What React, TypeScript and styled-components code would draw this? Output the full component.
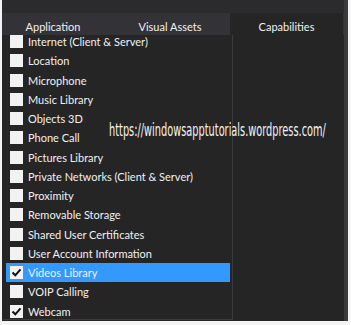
import React from 'react'
import styled, { createGlobalStyle } from 'styled-components'

interface CapabilityTypes {
  id: number
  label: string
  checked: boolean
  selected?: boolean
}

interface TabTypes {
  label: string
  width: number
  shift: number
}

const capabilities: CapabilityTypes[] = [
  { id: 1, label: 'Internet (Client & Server)', checked: false },
  { id: 2, label: 'Location', checked: false },
  { id: 3, label: 'Microphone', checked: false },
  { id: 4, label: 'Music Library', checked: false },
  { id: 5, label: 'Objects 3D', checked: false },
  { id: 6, label: 'Phone Call', checked: false },
  { id: 7, label: 'Pictures Library', checked: false },
  { id: 8, label: 'Private Networks (Client & Server)', checked: false },
  { id: 9, label: 'Proximity', checked: false },
  { id: 10, label: 'Removable Storage', checked: false },
  { id: 11, label: 'Shared User Certificates', checked: false },
  { id: 12, label: 'User Account Information', checked: false },
  { id: 13, label: 'Videos Library', checked: true, selected: true },
  { id: 14, label: 'VOIP Calling', checked: false },
  { id: 15, label: 'Webcam', checked: true },
]

const tabs: TabTypes[] = [
  { label: 'Application', width: 102, shift: 0 },
  { label: 'Visual Assets', width: 126, shift: 6 },
  { label: 'Capabilities', width: 113, shift: 0 },
]

const GlobalStyle = createGlobalStyle`
  body {
    margin: 0;
    background: #f4f4f4;
    font-family: Lato, 'Noto Sans', sans-serif;
  }
`

function App() {
  return (
    <>
      <GlobalStyle />
      <Frame>
        <TopStrip />
        <TabBar>
          {tabs.map((tab) => (
            <Tab key={tab.label} w={tab.width} shift={tab.shift} active={tab.label === 'Capabilities'}>
              {tab.label}
            </Tab>
          ))}
        </TabBar>
        <Body>
          <ListPanel>
            <List>
              {capabilities.map((item) => (
                <Row key={item.id} selected={item.selected}>
                  <Box>
                    {item.checked && (
                      <svg width="11" height="11" viewBox="0 0 11 11">
                        <path d="M1.5 5.5 L4.3 8.3 L9.5 2.3" fill="none" stroke="#111" strokeWidth="2" />
                      </svg>
                    )}
                  </Box>
                  <Label>{item.label}</Label>
                </Row>
              ))}
            </List>
          </ListPanel>
          <Watermark>https://windowsapptutorials.wordpress.com/</Watermark>
        </Body>
      </Frame>
    </>
  )
}

const Frame = styled.div`
  position: relative;
  margin-left: 2px;
  width: 346px;
  height: 321px;
  box-sizing: border-box;
  background: #252526;
  border-right: 4px solid #3a3a3d;
  display: flex;
  flex-direction: column;
  overflow: hidden;
`

const TopStrip = styled.div`
  height: 13px;
  background: #2b2b2e;
`

const TabBar = styled.div`
  display: flex;
  height: 22px;
  background: #333337;
`

const Tab = styled.div<{ active?: boolean; w: number; shift: number }>`
  width: ${(p) => p.w}px;
  display: flex;
  align-items: center;
  justify-content: center;
  padding-top: 5px;
  padding-left: ${(p) => p.shift}px;
  box-sizing: border-box;
  font-size: 11px;
  color: #f1f1f1;
  background: ${(p) => (p.active ? '#252526' : 'transparent')};
`

const Body = styled.div`
  position: relative;
  flex: 1;
  display: flex;
`

const ListPanel = styled.div`
  width: 229px;
  height: 284px;
  margin-left: 1px;
  border-right: 1px solid #3c3c40;
  border-bottom: 1px solid #3c3c40;
  overflow: hidden;
`

const List = styled.div`
  margin-top: -3px;
  padding-left: 3px;
`

const Row = styled.div<{ selected?: boolean }>`
  display: flex;
  align-items: center;
  height: 19.25px;
  gap: 5px;
  padding-left: 4px;
  margin-right: 2px;
  background: ${(p) => (p.selected ? '#3399ff' : 'transparent')};
`

const Box = styled.div`
  width: 13px;
  height: 13px;
  background: #f2f2f2;
  display: flex;
  align-items: center;
  justify-content: center;
`

const Label = styled.span`
  font-size: 11px;
  color: #f1f1f1;
  white-space: nowrap;
`

const Watermark = styled.div`
  position: absolute;
  left: 107px;
  top: 85px;
  font-family: 'DejaVu Sans Condensed', 'DejaVu Sans', sans-serif;
  font-size: 17px;
  color: #f4f4f4;
  white-space: nowrap;
  transform: scaleX(0.64);
  transform-origin: left center;
`

export default App
